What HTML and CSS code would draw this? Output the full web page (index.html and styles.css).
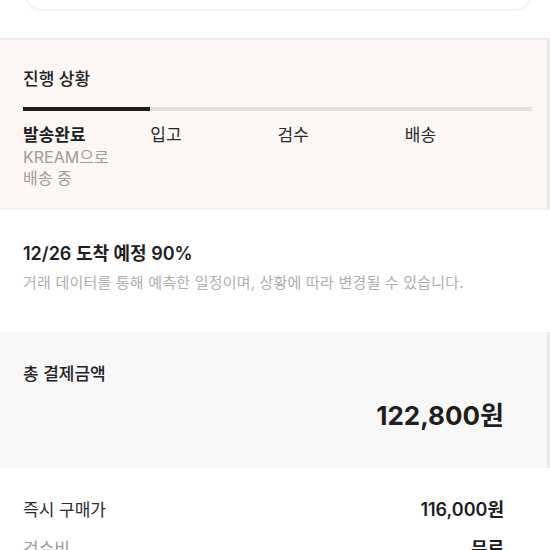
FILE: index.html
```html
<!DOCTYPE html>
<html lang="ko">
<head>
<meta charset="utf-8">
<link rel="stylesheet" href="styles.css">
</head>
<body>
<div class="top">
  <div class="card"></div>
</div>
<section class="progress">
  <h2 class="title">진행 상황</h2>
  <div class="track"><div class="fill"></div></div>
  <div class="steps">
    <div class="step">
      <div class="step-name active">발송완료</div>
      <div class="step-desc">KREAM으로<br>배송 중</div>
    </div>
    <div class="step"><div class="step-name">입고</div></div>
    <div class="step"><div class="step-name">검수</div></div>
    <div class="step"><div class="step-name">배송</div></div>
  </div>
</section>
<section class="eta">
  <div class="eta-title">12/26 도착 예정 90%</div>
  <div class="eta-sub">거래 데이터를 통해 예측한 일정이며, 상황에 따라 변경될 수 있습니다.</div>
</section>
<section class="total">
  <div class="total-label">총 결제금액</div>
  <div class="total-amount">122,800원</div>
</section>
<section class="detail">
  <div class="row">
    <span class="row-label">즉시 구매가</span>
    <span class="row-value">116,000원</span>
  </div>
  <div class="row">
    <span class="row-label muted">검수비</span>
    <span class="row-value">무료</span>
  </div>
</section>
</body>
</html>
```

FILE: styles.css
```css
* { box-sizing: border-box; margin: 0; padding: 0; }
html, body { background: #fff; }
body {
  width: 550px;
  height: 550px;
  overflow: hidden;
  font-family: Inter, "Noto Sans CJK KR", sans-serif;
  color: #222;
}
.top {
  display: flow-root;
  height: 40px;
  border-bottom: 2px solid #ebebeb;
  padding: 0 20px 0 26px;
}
.card {
  margin-top: -30px;
  height: 40px;
  background: #fff;
  border: 1px solid #ededed;
  border-radius: 14px;
  box-shadow: 0 1px 2px rgba(0,0,0,0.03);
}
.progress {
  background: #fcf6f5;
  padding: 28px 18px 0 23px;
  border-bottom: 2px solid #f3efef;
  border-right: 3px solid #ece8e8;
  height: 170px;
}
.title {
  font-size: 17px;
  line-height: 22px;
  font-weight: 500;
  color: #222;
}
.track {
  margin-top: 17px;
  height: 4px;
  background: #e4dfdf;
  margin-right: -3px;
}
.fill {
  width: 127px;
  height: 4px;
  background: #1c1c1c;
}
.steps {
  display: grid;
  grid-template-columns: repeat(4, 1fr);
  margin-top: 13px;
  margin-right: -3px;
}
.step-name {
  font-size: 17px;
  line-height: 22px;
  color: #2a2a2a;
}
.step-name.active { font-weight: 700; color: #1e1e1e; }
.step-desc {
  margin-top: 1px;
  font-size: 16px;
  line-height: 21px;
  color: #9b9b9b;
}
.eta {
  padding: 31px 23px 0;
  height: 122px;
}
.eta-title {
  font-size: 18px;
  line-height: 26px;
  font-weight: 600;
  color: #1e1e1e;
}
.eta-sub {
  margin-top: 6px;
  font-size: 15px;
  line-height: 20px;
  color: #aeaeae;
  letter-spacing: 0.2px;
}
.total {
  background: #f8f8f8;
  padding: 31px 46px 0 23px;
  height: 136px;
  border-right: 3px solid #ececec;
}
.total-label {
  font-size: 17px;
  line-height: 22px;
  font-weight: 500;
  color: #222;
}
.total-amount {
  margin-top: 15px;
  text-align: right;
  font-size: 26px;
  line-height: 32px;
  font-weight: 700;
  color: #1e1e1e;
  margin-right: -3px;
}
.detail {
  padding: 29px 46px 0 23px;
  display: flex;
  flex-direction: column;
  gap: 17px;
}
.row {
  display: flex;
  justify-content: space-between;
  align-items: center;
  height: 22px;
}
.row-label {
  font-size: 17px;
  color: #2a2a2a;
}
.row-label.muted { color: #9b9b9b; }
.row-value {
  font-size: 18px;
  font-weight: 600;
  color: #1e1e1e;
}
```
